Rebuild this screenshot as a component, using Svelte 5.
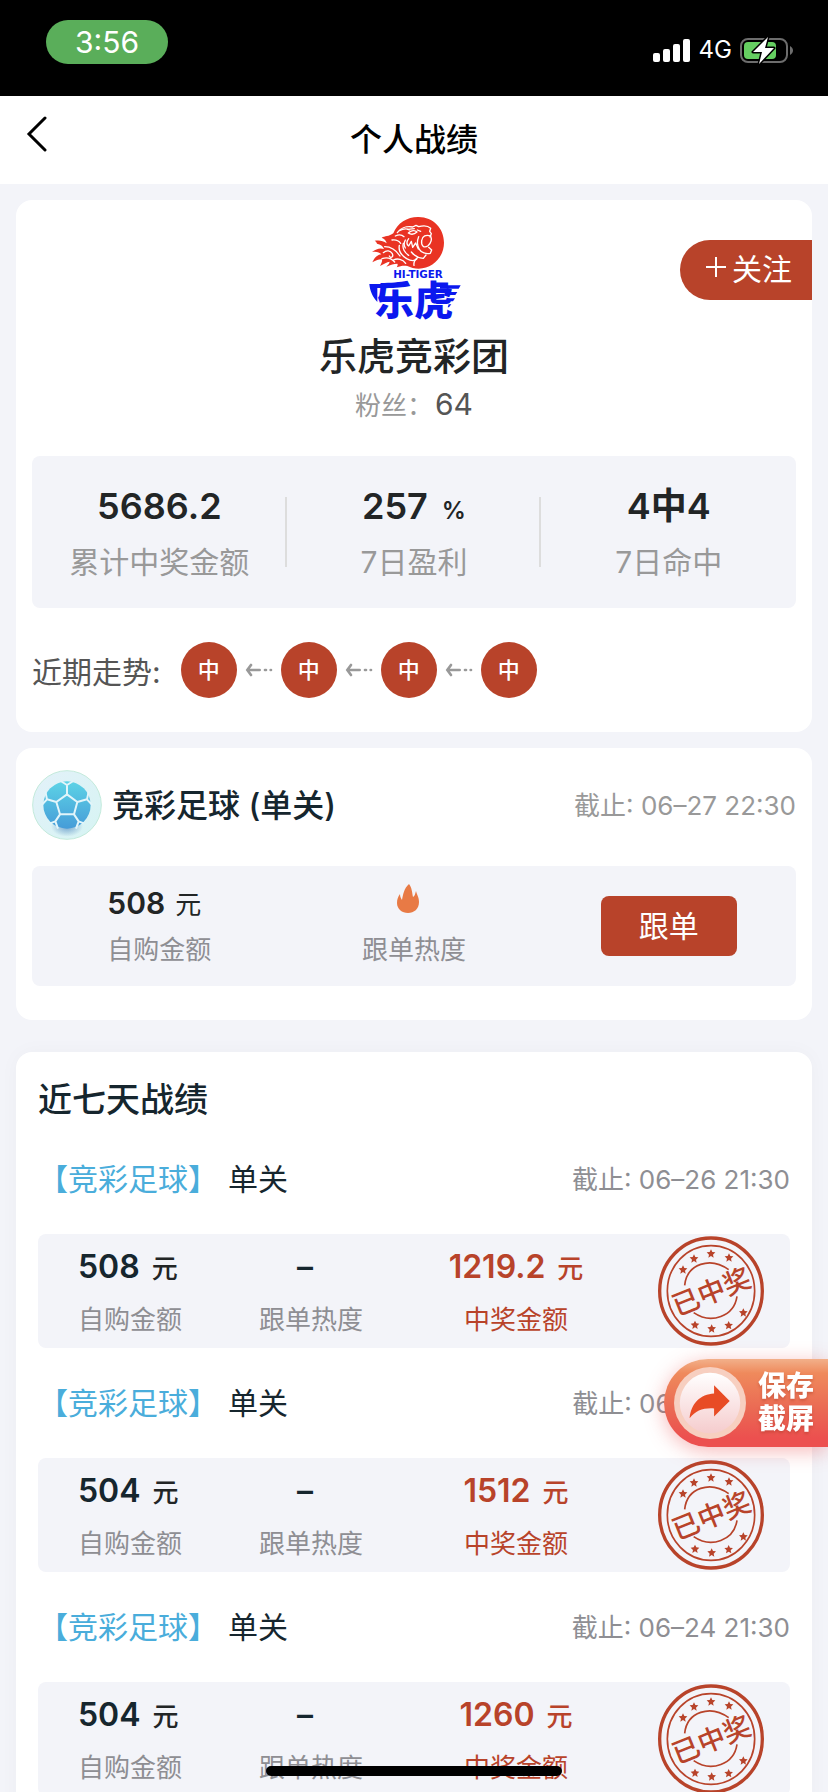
<script lang="ts">
	const stats = [
		{ value: '5686.2', unit: '', label: '累计中奖金额' },
		{ value: '257', unit: '%', label: '7日盈利' },
		{ value: '4中4', unit: '', label: '7日命中' }
	];

	const trend = ['中', '中', '中', '中'];

	const records = [
		{ deadline: '06–26 21:30', amount: '508', prize: '1219.2' },
		{ deadline: '06–25 21:30', amount: '504', prize: '1512' },
		{ deadline: '06–24 21:30', amount: '504', prize: '1260' }
	];

	const stars = [
		[183, 178],
		[216, 145],
		[267, 130],
		[321, 142],
		[364, 307],
		[320, 345],
		[269, 355],
		[219, 344]
	];
</script>

<div class="page">
	<div class="status-bar">
		<span class="clock">3:56</span>
		<div class="status-icons">
			<svg width="38" height="24" viewBox="0 0 38 24" fill="#fff">
				<rect x="0" y="15" width="7" height="9" rx="2" />
				<rect x="10" y="11" width="7" height="13" rx="2" />
				<rect x="20" y="6" width="7" height="18" rx="2" />
				<rect x="30" y="1" width="7" height="23" rx="2" />
			</svg>
			<span>4G</span>
			<svg width="54" height="28" viewBox="0 0 54 28">
				<rect x="1" y="3" width="46" height="23" rx="7" fill="none" stroke="#6d6d6d" stroke-width="2" />
				<path d="M50 10c4 2 4 7 0 9z" fill="#6d6d6d" />
				<rect x="4" y="6" width="32" height="17" rx="4" fill="#65cf61" />
				<path
					d="M28 1L13 16h9l-3 12 15-16h-9z"
					fill="#fff"
					stroke="#000"
					stroke-width="3"
					stroke-linejoin="round"
					paint-order="stroke"
				/>
			</svg>
		</div>
	</div>

	<header>
		<button class="back" aria-label="返回">
			<svg width="22" height="36" viewBox="0 0 22 36">
				<path d="M19 2L3 18l16 16" fill="none" stroke="#000" stroke-width="3" stroke-linecap="round" />
			</svg>
		</button>
		<h1>个人战绩</h1>
	</header>

	<main>
		<section class="card profile">
			<button class="follow"><svg width="20" height="20" viewBox="0 0 20 20"><path d="M10 0v20M0 10h20" stroke="#fff" stroke-width="2" /></svg>关注</button>
			<svg class="avatar" width="104" height="104" viewBox="66 48 312 312">
				<path
					fill="#e93323"
					d="M160 100C172 68 204 50 236 51c43 0 76 34 76 77s-33 77-76 78c-12 0-24-3-34-8-10-2-20-1-32 4 3-5 4-8 2-11-10 0-20 3-33 9 6-6 9-10 10-15-9 2-16 5-29 13 5-9 7-14 6-20-8-1-16 2-29 9 8-16 15-22 27-24-6-7-15-9-28-7 13-10 24-13 36-9-4-9-10-14-21-16-1-5-4-7-7-9 13-2 25-1 36 8-2-8-6-13-15-17 9-5 22-3 35-13z"
				/>
				<g fill="none" stroke="#fff" stroke-width="4" stroke-linecap="round" stroke-linejoin="round">
					<path d="M172 98c8-13 26-20 46-17l10-5 8 4c14-4 28-3 36 5l-3 9 5 7-4 10" />
					<path d="M178 92c12-6 22-7 30-2M166 108c10-5 20-4 26 2M156 120c12-2 20 2 26 10" />
					<path d="M205 99c9-9 20-9 26-3-8 7-17 9-26 3zM203 88l20-2M232 90l10 4" />
					<path d="M272 108c-14-5-25 0-27 14-2 15 7 24 19 15 9-8 12-19 8-29z" />
					<path d="M236 110c-6 14-5 26 2 38 6 10 20 15 33 12l4-10-9-8" />
					<path d="M196 120c-5 9-5 16 0 24M206 116c-8 10-6 18 0 22l8-14 4 18 9-13 8 18" />
					<path d="M190 130c-4 15 4 29 16 36M178 136c-3 15 6 30 22 40 14 8 22 8 30 2" />
					<path d="M214 156c8 10 20 18 36 19l8-10M222 196c-2-12 3-18 12-24" />
					<path d="M134 140c20 0 34 10 46 28M130 158c10-9 21-6 27 3 4 9-4 16-9 7M126 176c15-5 29 0 38 10M160 180c12-6 28-3 37 10" />
				</g>
				<g fill="#0b18ee">
					<text x="234" y="234" text-anchor="middle" font-family="'DejaVu Sans', sans-serif" font-size="31" font-weight="700">HI-TIGER</text>
					<text x="222" y="344" text-anchor="middle" font-size="118" font-weight="900">乐虎</text>
					<path d="M88 252h40v12h-16v42c-14-16-22-32-24-54z" />
					<path d="M300 256h62l-6 10h-56zM318 276h34l-6 9h-28zM324 295h21l-6 9h-15zM326 313h8l-7 9h-4z" />
				</g>
			</svg>
			<h2>乐虎竞彩团</h2>
			<p class="fans">粉丝：<b>64</b></p>

			<div class="stats">
				{#each stats as stat}
					<div class="stat">
						<strong>{stat.value}{#if stat.unit}<small>{stat.unit}</small>{/if}</strong>
						<span>{stat.label}</span>
					</div>
				{/each}
			</div>

			<div class="trend">
				<span class="trend-label">近期走势:</span>
				{#each trend as item, i}
					{#if i > 0}
						<svg class="arrow" width="28" height="16" viewBox="198 90 84 48" stroke="#999" stroke-width="8" stroke-linecap="round">
							<path d="M216 99l-11 15 11 15M206 114h36M258 114h3M275 114h1" fill="none" />
						</svg>
					{/if}
					<span class="hit">{item}</span>
				{/each}
			</div>
		</section>

		<section class="card current">
			<div class="current-head">
				<svg width="70" height="70" viewBox="36 30 210 210">
					<defs>
						<linearGradient id="ball" x1="0" y1="0" x2="0" y2="1">
							<stop offset="0" stop-color="#5dd3e6" />
							<stop offset="1" stop-color="#469cd8" />
						</linearGradient>
						<linearGradient id="plate" x1="0" y1="0" x2="1" y2="1">
							<stop offset="0" stop-color="#e3f1f9" />
							<stop offset="1" stop-color="#d6f4f3" />
						</linearGradient>
						<radialGradient id="shade">
							<stop offset="0" stop-color="#5d93c4" stop-opacity="0.8" />
							<stop offset="1" stop-color="#5d93c4" stop-opacity="0" />
						</radialGradient>
					</defs>
					<circle cx="141" cy="135" r="103" fill="url(#plate)" stroke="#c3eadb" stroke-width="3" />
					<ellipse cx="141" cy="200" rx="48" ry="30" fill="url(#shade)" />
					<circle cx="141" cy="135" r="71" fill="url(#ball)" />
					<path
						fill="none"
						stroke="#e2f5fa"
						stroke-width="6"
						stroke-linejoin="round"
						d="M141 103l31 23-10 37h-42l-11-37zM141 103V75M172 126l29-8M162 163l14 21M120 163l-14 21M109 126l-28-8M122 63l19 12 19-12M206 94l-5 24 16 17M192 190l-16-6-8 22M90 190l16-6 8 22M76 94l5 24-16 17"
					/>
				</svg>
				<h3>竞彩足球 (单关)</h3>
				<time>截止: 06–27 22:30</time>
			</div>
			<div class="current-body">
				<div class="cell">
					<div class="figure">
						<strong>508<small>元</small></strong>
						<span>自购金额</span>
					</div>
				</div>
				<div class="cell">
					<div class="figure heat">
						<svg width="24" height="30" viewBox="0 0 24 30">
							<path d="M13 0c3 4 3 8 4 13 2-1 2-3 3-6 1 4 3 6 3 11 0 7-5 11-11 11S1 25 1 19c0-4 1-6 3-9 0 3 1 4 2 6C7 11 8 4 13 0z" fill="#e87a45" />
						</svg>
						<span>跟单热度</span>
					</div>
				</div>
				<div class="cell">
					<button class="copy">跟单</button>
				</div>
			</div>
		</section>

		<section class="card history">
			<h2>近七天战绩</h2>
			{#each records as record}
				<div class="record-head">
					<span class="game">【竞彩足球】</span>
					<span class="kind">单关</span>
					<time>截止: {record.deadline}</time>
				</div>
				<div class="record">
					<div class="cell">
						<div class="figure left">
							<strong>{record.amount}<small>元</small></strong>
							<span>自购金额</span>
						</div>
					</div>
					<div class="cell">
						<div class="figure">
							<strong>–<small></small></strong>
							<span>跟单热度</span>
						</div>
					</div>
					<div class="cell">
						<div class="figure prize">
							<strong>{record.prize}<small>元</small></strong>
							<span>中奖金额</span>
						</div>
					</div>
					<div class="cell">
						<svg width="108" height="110" viewBox="105 77 324 330" fill="none" stroke="#b8432a">
							<ellipse cx="267" cy="242" rx="154" ry="159" stroke-width="10" />
							<ellipse cx="267" cy="242" rx="131" ry="136" stroke-width="5" />
							<path d="M188 225C195 160 265 138 320 178M345 258C336 318 268 343 215 307" stroke-width="5" />
							{#each stars as [x, y]}
								<path
									transform="translate({x} {y})"
									d="M0-13l4 8 9 1-7 7 2 9-8-5-8 5 2-9-7-7 9-1z"
									fill="#b8432a"
									stroke="none"
								/>
							{/each}
							<text
								transform="rotate(-22 268 244)"
								x="268"
								y="274"
								text-anchor="middle"
								font-size="82"
								font-weight="500"
								fill="#b8432a"
								stroke="none">已中奖</text
							>
						</svg>
					</div>
				</div>
			{/each}
		</section>
	</main>

	<button class="save">
		<svg width="72" height="72" viewBox="162 472 212 212">
			<defs>
				<linearGradient id="disc" x1="0" y1="0" x2="0" y2="1">
					<stop offset="0" stop-color="#fff" />
					<stop offset="1" stop-color="#f5cccd" />
				</linearGradient>
			</defs>
			<circle cx="268" cy="578" r="106" fill="#f7cfc0" />
			<circle cx="268" cy="578" r="89" fill="url(#disc)" />
			<path d="M280 526l46 46-46 46v-24c-32-2-54 6-72 29 4-44 32-71 72-73z" fill="#e84c25" />
		</svg>
		<span>保存<br />截屏</span>
	</button>
	<div class="home-indicator"></div>
</div>

<style>
	:global(body) {
		background-color: #f3f4f9;
	}
	.page {
		height: 100vh;
		display: flex;
		flex-flow: column nowrap;
		overflow: hidden;
		color: #222526;
		background-color: #f3f4f9;
		font-family: Inter, 'Noto Sans CJK SC', sans-serif;
	}
	h1,
	h2,
	h3,
	p {
		margin: 0;
		font-weight: 500;
	}
	button {
		border: 0;
		padding: 0;
		font-family: inherit;
		color: #fff;
		cursor: pointer;
	}
	small {
		line-height: 0;
	}
	svg {
		display: block;
		flex: none;
	}
	.status-bar {
		flex: none;
		display: flex;
		justify-content: space-between;
		align-items: flex-start;
		height: 76px;
		padding: 20px 34px 0 46px;
		background-color: #000;
		color: #fff;
	}
	.clock {
		width: 122px;
		line-height: 44px;
		border-radius: 22px;
		background-color: #5aae5a;
		text-align: center;
		font-size: 30px;
	}
	.status-icons {
		display: flex;
		align-items: center;
		gap: 8px;
		padding-top: 14px;
		font-size: 24px;
		line-height: 32px;
	}
	header {
		flex: none;
		display: grid;
		grid-template-columns: 80px 1fr 80px;
		align-items: center;
		height: 88px;
		background-color: #fff;
	}
	.back {
		justify-self: start;
		padding: 0 26px 12px;
		background: none;
	}
	h1 {
		color: #000;
		font-size: 32px;
		line-height: 44px;
		text-align: center;
	}
	main {
		flex: 1;
		min-height: 0;
		padding: 16px;
		overflow-y: auto;
		scrollbar-width: none;
	}
	.card {
		border-radius: 16px;
		background-color: #fff;
	}
	.profile {
		position: relative;
		padding: 16px 16px 34px;
		margin-bottom: 16px;
	}
	.follow {
		position: absolute;
		top: 40px;
		right: 0;
		display: flex;
		align-items: center;
		justify-content: center;
		gap: 6px;
		width: 132px;
		height: 60px;
		padding: 0 0 6px 6px;
		border-radius: 30px 0 0 30px;
		background-color: #b8432a;
		font-size: 30px;
	}
	.avatar {
		margin: 0 auto;
		overflow: visible;
	}
	.profile h2 {
		margin-top: 10px;
		font-size: 38px;
		line-height: 52px;
		text-align: center;
	}
	.fans {
		margin-top: 4px;
		color: #999;
		font-size: 26px;
		font-weight: 400;
		line-height: 40px;
		text-align: center;
	}
	.fans b {
		margin-left: 2px;
		color: #555;
		font-size: 30px;
		font-weight: 400;
		line-height: 0;
	}
	.stats {
		display: flex;
		margin-top: 30px;
		padding: 24px 0;
		border-radius: 8px;
		background-color: #f3f4f9;
	}
	.stat {
		flex: 1;
		display: flex;
		flex-flow: column nowrap;
		align-items: center;
		gap: 8px;
		background: linear-gradient(#ddd, #ddd) right center / 2px 70px no-repeat;
	}
	.stat:last-child {
		background: none;
	}
	.stat strong {
		font-size: 36px;
		font-weight: 600;
		line-height: 52px;
	}
	.stat small {
		margin-left: 14px;
		font-size: 24px;
	}
	.stat span {
		color: #999;
		font-size: 30px;
		line-height: 44px;
	}
	.trend {
		display: flex;
		align-items: center;
		gap: 8px;
		margin-top: 34px;
	}
	.trend-label {
		margin-right: 12px;
		color: #555;
		font-size: 30px;
	}
	.hit {
		width: 56px;
		line-height: 56px;
		border-radius: 50%;
		background-color: #b8432a;
		color: #fff;
		font-size: 22px;
		font-weight: 500;
		text-align: center;
	}
	.current {
		padding: 22px 16px 34px;
		margin-bottom: 32px;
	}
	.current-head {
		display: flex;
		align-items: center;
		gap: 10px;
	}
	h3 {
		color: #16262e;
		font-size: 32px;
	}
	time {
		margin-left: auto;
		color: #999;
		font-size: 26px;
	}
	.current-head h3,
	.current-head time {
		padding-bottom: 4px;
	}
	.current-body {
		display: grid;
		grid-template-columns: repeat(3, 1fr);
		margin-top: 26px;
		padding: 14px 0;
		border-radius: 8px;
		background-color: #f3f4f9;
	}
	.cell {
		display: flex;
		align-items: center;
		justify-content: center;
	}
	.figure {
		display: flex;
		flex-flow: column nowrap;
		align-items: center;
		gap: 2px;
		white-space: nowrap;
	}
	.figure strong {
		font-size: 30px;
		font-weight: 600;
		line-height: 46px;
	}
	.figure small {
		margin-left: 10px;
		font-size: 26px;
		font-weight: 400;
	}
	.figure span {
		color: #8e8e93;
		font-size: 26px;
		line-height: 44px;
	}
	.current .figure {
		align-items: flex-start;
	}
	.current .heat {
		align-items: center;
	}
	.heat svg {
		margin: 4px 12px 12px 0;
	}
	.copy {
		width: 136px;
		height: 60px;
		padding-bottom: 4px;
		border-radius: 8px;
		background-color: #b8432a;
		font-size: 30px;
	}
	.history {
		padding: 24px 22px;
		box-shadow: 0 0 20px rgba(0, 0, 0, 0.03);
	}
	.history h2 {
		color: #16262e;
		font-size: 34px;
		line-height: 48px;
	}
	.record-head {
		box-sizing: border-box;
		display: flex;
		align-items: center;
		height: 110px;
		padding-bottom: 4px;
		font-size: 30px;
	}
	.game {
		color: #4aaddb;
	}
	.kind {
		margin-left: 10px;
		color: #16262e;
	}
	.record-head time {
		color: #8e8e93;
	}
	.record {
		display: grid;
		grid-template-columns: 184fr 178fr 232fr 158fr;
		height: 114px;
		border-radius: 8px;
		background-color: #f3f4f9;
	}
	.record .figure {
		gap: 8px;
		padding-top: 4px;
	}
	.record .left {
		align-items: flex-start;
	}
	.record strong {
		color: #16262e;
		font-size: 32px;
	}
	.record small {
		margin-left: 12px;
		color: #222526;
		font-weight: 500;
	}
	.record .prize strong,
	.record .prize small,
	.record .prize span {
		color: #b8432a;
	}
	.save {
		position: fixed;
		right: 0;
		bottom: 345px;
		display: flex;
		align-items: center;
		gap: 12px;
		width: 164px;
		height: 88px;
		padding-left: 10px;
		border-radius: 44px 0 0 44px;
		background: linear-gradient(#f2b08a, #ef8a5c 16%, #ea6753 60%, #ec504f 90%);
		box-shadow: 0 4px 20px rgba(236, 80, 79, 0.4);
		font-size: 28px;
		font-weight: 900;
		line-height: 33px;
		text-shadow: 0 2px 3px rgba(160, 50, 30, 0.4);
	}
	.home-indicator {
		position: fixed;
		bottom: 16px;
		left: 50%;
		width: 296px;
		height: 10px;
		margin-left: -148px;
		border-radius: 5px;
		background-color: #000;
	}
</style>
